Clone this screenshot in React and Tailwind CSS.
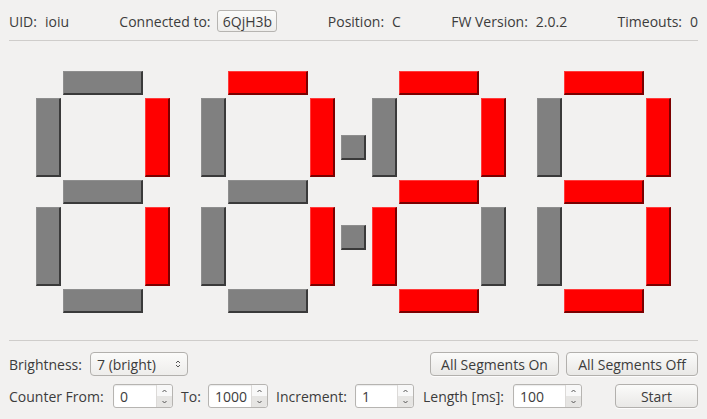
import React from "react";

const ON = {
    1: "bc",
    7: "abc",
    2: "abged",
    3: "abgcd",
};

// where each segment sits in the digit grid
const SEGMENTS = [
    { id: "a", cls: "col-start-2 row-start-1", horizontal: true },
    { id: "f", cls: "col-start-1 row-start-2", horizontal: false },
    { id: "b", cls: "col-start-3 row-start-2", horizontal: false },
    { id: "g", cls: "col-start-2 row-start-3", horizontal: true },
    { id: "e", cls: "col-start-1 row-start-4", horizontal: false },
    { id: "c", cls: "col-start-3 row-start-4", horizontal: false },
    { id: "d", cls: "col-start-2 row-start-5", horizontal: true },
];

const Segment = ({ on, className = "" }) => {
    return (
        <div
            className={`${className} ${
                on
                    ? "bg-[#ff0000] border-t border-l border-t-[#ff3b3b] border-l-[#ff3b3b] border-r-2 border-b-2 border-r-[#7a0000] border-b-[#7a0000]"
                    : "bg-[#808080] border-t border-l border-t-[#8e8e8e] border-l-[#8e8e8e] border-r-2 border-b-2 border-r-[#3a3a3a] border-b-[#3a3a3a]"
            }`}
        ></div>
    );
};

const Digit = ({ value }) => {
    const lit = ON[value] || "";
    return (
        <div className="grid grid-cols-[25px_80px_25px] grid-rows-[24px_79px_24px_79px_24px] gap-x-[2px] gap-y-[3px]">
            {SEGMENTS.map((s) => (
                <Segment key={s.id} on={lit.includes(s.id)} className={s.cls} />
            ))}
        </div>
    );
};

const SpinArrows = () => (
    <div className="flex flex-col w-[16px] border-l border-[#dcdad8]">
        <div className="flex-1 flex items-center justify-center bg-[#f8f8f8] rounded-tr-[3px]">
            <svg width="5" height="4" viewBox="0 0 5 4">
                <path d="M0.5 3 L2.5 1 L4.5 3" fill="none" stroke="#555" strokeWidth="1" />
            </svg>
        </div>
        <div className="flex-1 flex items-center justify-center bg-[#e6e5e3] rounded-br-[3px]">
            <svg width="5" height="4" viewBox="0 0 5 4">
                <path d="M0.5 1 L2.5 3 L4.5 1" fill="none" stroke="#555" strokeWidth="1" />
            </svg>
        </div>
    </div>
);

const SpinBox = ({ value, width }) => (
    <div className={`flex h-[24px] ${width} border border-[#b6b4b1] rounded-[3px] bg-white shadow-[inset_0_1px_1px_rgba(0,0,0,0.08)]`}>
        <div className="flex-1 flex items-center pl-[6px] text-[#3c3c3c]">{value}</div>
        <SpinArrows />
    </div>
);

const Button = ({ children, width }) => (
    <button className={`h-[24px] ${width} border border-[#b2b0ad] rounded-[4px] bg-gradient-to-b from-[#fbfbfa] to-[#e9e8e6] text-[#3c3c3c] shadow-[0_1px_0_rgba(255,255,255,0.8)]`}>
        {children}
    </button>
);

const App = () => {
    return (
        <div
            className="w-[707px] h-[419px] bg-[#f2f1f0] text-[14px] text-[#3c3c3c] flex flex-col overflow-hidden"
            style={{ fontFamily: '"Open Sans", "Noto Sans", sans-serif' }}
        >
            {/* Header */}
            <div className="h-[40px] pt-[2px] px-[9px] flex items-center justify-between">
                <div className="flex items-center gap-[8px]">
                    <span>UID:</span>
                    <span>ioiu</span>
                </div>
                <div className="flex items-center gap-[7px]">
                    <span>Connected to:</span>
                    <span className="h-[22px] w-[60px] flex items-center justify-center border border-[#b6b4b1] rounded-[3px] bg-gradient-to-b from-[#fbfbfa] to-[#eeedeb]">
                        6QjH3b
                    </span>
                </div>
                <div className="flex items-center gap-[8px]">
                    <span>Position:</span>
                    <span>C</span>
                </div>
                <div className="flex items-center gap-[8px]">
                    <span>FW Version:</span>
                    <span>2.0.2</span>
                </div>
                <div className="flex items-center gap-[8px]">
                    <span>Timeouts:</span>
                    <span>0</span>
                </div>
            </div>
            <div className="mx-[9px] h-px bg-[#cfcdcb]"></div>

            {/* Seven segment display */}
            <div className="flex justify-center pt-[30px] h-[299px]">
                <Digit value={1} />
                <div className="ml-[31px]">
                    <Digit value={7} />
                </div>
                <div className="mx-[6px] pt-[64px] flex flex-col gap-[65px]">
                    <Segment on={false} className="w-[25px] h-[25px]" />
                    <Segment on={false} className="w-[25px] h-[25px]" />
                </div>
                <Digit value={2} />
                <div className="ml-[31px]">
                    <Digit value={3} />
                </div>
            </div>
            <div className="mx-[9px] h-px bg-[#cfcdcb]"></div>

            {/* Controls */}
            <div className="px-[9px] pt-[11px] flex flex-col gap-[8px]">
                <div className="flex items-center h-[24px]">
                    <span className="w-[81px]">Brightness:</span>
                    <div className="flex items-center h-[24px] w-[98px] border border-[#b2b0ad] rounded-[4px] bg-gradient-to-b from-[#fbfbfa] to-[#eeedeb] pl-[6px] pr-[6px]">
                        <span className="flex-1">7 (bright)</span>
                        <svg width="6" height="10" viewBox="0 0 6 10">
                            <path d="M1 4 L3 2 L5 4" fill="none" stroke="#555" strokeWidth="1" />
                            <path d="M1 6 L3 8 L5 6" fill="none" stroke="#555" strokeWidth="1" />
                        </svg>
                    </div>
                    <div className="ml-auto flex gap-[7px]">
                        <Button width="w-[129px]">All Segments On</Button>
                        <Button width="w-[132px]">All Segments Off</Button>
                    </div>
                </div>
                <div className="flex items-center h-[24px]">
                    <span className="w-[104px]">Counter From:</span>
                    <SpinBox value="0" width="w-[60px]" />
                    <span className="w-[27px] ml-[8px]">To:</span>
                    <SpinBox value="1000" width="w-[60px]" />
                    <span className="w-[79px] ml-[8px]">Increment:</span>
                    <SpinBox value="1" width="w-[59px]" />
                    <span className="w-[90px] ml-[9px]">Length [ms]:</span>
                    <SpinBox value="100" width="w-[69px]" />
                    <div className="ml-auto">
                        <Button width="w-[83px]">Start</Button>
                    </div>
                </div>
            </div>
        </div>
    );
};

export default App;
